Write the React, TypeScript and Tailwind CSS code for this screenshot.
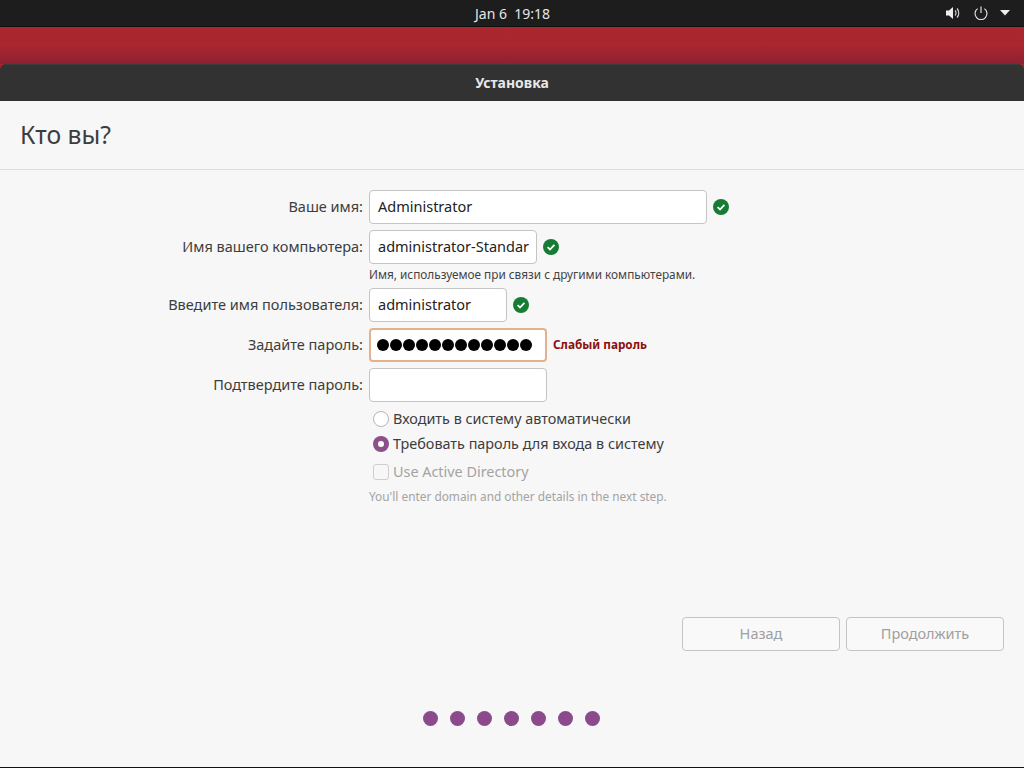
const FONT = "font-['Noto_Sans',sans-serif]";

function CheckBadge() {
  return (
    <svg width="16" height="16" viewBox="0 0 16 16" className="shrink-0">
      <circle cx="8" cy="8" r="8" fill="#167c34" />
      <path d="M4.6 8.2 7 10.5l4.4-4.6" fill="none" stroke="#fff" strokeWidth="1.8" />
    </svg>
  );
}

function Field({ label, width, value, ok }: { label: string; width: string; value: string; ok?: boolean }) {
  return (
    <div className="flex items-center">
      <div className="w-[363px] text-right text-[14.5px] text-[#3d3d3d]">{label}</div>
      <div className={`ml-[6px] h-[34px] ${width} bg-white border border-[#c4c4c4] rounded-[4px] px-2 flex items-center text-[14.5px] text-[#222] overflow-hidden whitespace-nowrap`}>
        {value}
      </div>
      {ok && (
        <div className="ml-[6px]">
          <CheckBadge />
        </div>
      )}
    </div>
  );
}

export default function App() {
  return (
    <div className={`${FONT} w-[1024px] h-[768px] overflow-hidden flex flex-col bg-[#a8262d]`}>
      {/* top panel */}
      <div className="h-[27px] shrink-0 bg-[#1d1d1d] border-b border-[#111] flex items-center text-[#e6e6e6] relative">
        <div className="w-full text-center text-[14px] pl-[1px]">Jan 6&nbsp;&nbsp;19:18</div>
        <div className="absolute left-[945px] top-[5px] flex items-center">
          <svg width="16" height="16" viewBox="0 0 16 16">
            <path d="M1 5.5h3L8 2v12L4 10.5H1z" fill="#eee" />
            <path d="M10 5.5a3.5 3.5 0 0 1 0 5M12 3.5a6.5 6.5 0 0 1 0 9" fill="none" stroke="#ddd" strokeWidth="1.1" />
          </svg>
          <svg width="16" height="16" viewBox="0 0 16 16" className="ml-[12px]">
            <path d="M4.6 3.6a6 6 0 1 0 6.8 0" fill="none" stroke="#eee" strokeWidth="1.1" />
            <path d="M8 1.5v6.5" stroke="#eee" strokeWidth="1.1" />
          </svg>
          <svg width="10" height="6" viewBox="0 0 10 6" className="ml-[11px]">
            <path d="M0 0h10L5 5.5z" fill="#eee" />
          </svg>
        </div>
      </div>

      {/* wallpaper strip */}
      <div className="h-[37px] shrink-0 bg-gradient-to-b from-[#ab262d] via-[#a9272f] to-[#8f1f33]" />

      {/* window */}
      <div className="flex-1 flex flex-col min-h-0 rounded-t-[6px] overflow-hidden border-b border-[#111]">
        <div className="h-[37px] shrink-0 bg-[#333232] border-t border-[#3e3d3d] flex items-center justify-center pb-[2px] text-[14px] font-bold text-[#e8e8e8]">
          Установка
        </div>
        <div className="flex-1 bg-[#f7f7f7] flex flex-col min-h-0">
          <div className="h-[69px] shrink-0 border-b border-[#dcdcdc] pl-5 flex items-center text-[24.7px] text-[#3d3d3d]">
            Кто вы?
          </div>

          <div className="pt-5 flex flex-col">
            <Field label="Ваше имя:" width="w-[338px]" value="Administrator" ok />
            <div className="mt-[6px]">
              <Field label="Имя вашего компьютера:" width="w-[168px]" value="administrator-Standar" ok />
            </div>
            <div className="ml-[369px] mt-[2px] h-[16px] leading-[16px] text-[11.8px] text-[#444]">
              Имя, используемое при связи с другими компьютерами.
            </div>
            <div className="mt-[6px]">
              <Field label="Введите имя пользователя:" width="w-[138px]" value="administrator" ok />
            </div>

            <div className="mt-[6px] flex items-center">
              <div className="w-[363px] text-right text-[14.5px] text-[#3d3d3d]">Задайте пароль:</div>
              <div className="ml-[6px] h-[34px] w-[178px] bg-white border-2 border-[#e5b08c] rounded-[4px] pl-[6px] flex items-center gap-[1px]">
                {Array.from({ length: 12 }).map((_, i) => (
                  <span key={i} className="w-[12px] h-[12px] rounded-full bg-black" />
                ))}
              </div>
              <div className="ml-[6px] text-[11.75px] font-bold text-[#8b0f0f]">Слабый пароль</div>
            </div>

            <div className="mt-[6px]">
              <Field label="Подтвердите пароль:" width="w-[178px]" value="" />
            </div>

            <div className="ml-[373px] mt-[8px] flex items-center h-[18px] text-[14.4px] text-[#3d3d3d]">
              <span className="w-[16px] h-[16px] rounded-full border border-[#b5b5b5] bg-white" />
              <span className="ml-[4px]">Входить в систему автоматически</span>
            </div>
            <div className="ml-[373px] mt-[7px] flex items-center h-[18px] text-[14.4px] text-[#3d3d3d]">
              <span className="w-[16px] h-[16px] rounded-full bg-[#8c4f8c] flex items-center justify-center">
                <span className="w-[6px] h-[6px] rounded-full bg-white" />
              </span>
              <span className="ml-[4px]">Требовать пароль для входа в систему</span>
            </div>
            <div className="ml-[373px] mt-[10px] flex items-center h-[18px] text-[14.4px] text-[#a3a3a3]">
              <span className="w-[16px] h-[16px] rounded-[3px] border border-[#cfcfcf] bg-[#f7f7f7]" />
              <span className="ml-[4px]">Use Active Directory</span>
            </div>
            <div className="ml-[369px] mt-[7px] h-[16px] leading-[16px] text-[11.85px] text-[#a3a3a3]">
              You'll enter domain and other details in the next step.
            </div>
          </div>

          <div className="mt-[113px] flex justify-end gap-[6px] pr-5">
            <button className="w-[158px] h-[34px] border border-[#c4c4c4] rounded-[4px] text-[14.5px] text-[#a0a0a0] bg-[#f9f9f9]">
              Назад
            </button>
            <button className="w-[158px] h-[34px] border border-[#c4c4c4] rounded-[4px] text-[14.5px] text-[#a0a0a0] bg-[#f9f9f9]">
              Продолжить
            </button>
          </div>

          <div className="mt-[60px] flex justify-center gap-[12px] pr-[2px]">
            {Array.from({ length: 7 }).map((_, i) => (
              <span key={i} className="w-[15px] h-[15px] rounded-full bg-[#8a4a8c]" />
            ))}
          </div>
        </div>
      </div>
    </div>
  );
}
